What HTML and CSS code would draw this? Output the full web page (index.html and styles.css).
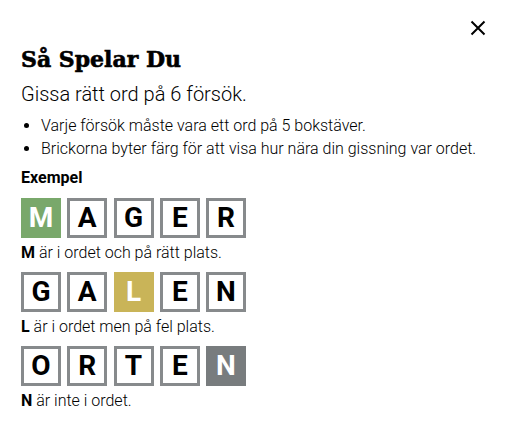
FILE: index.html
```html
<!DOCTYPE html>
<html lang="sv">
<head>
<meta charset="utf-8">
<title>Så Spelar Du</title>
<link rel="stylesheet" href="styles.css">
</head>
<body>
<div class="modal">
  <div class="modal-header">
    <button class="close" aria-label="Stäng">
      <svg width="16" height="16" viewBox="0 0 16 16"><path d="M1.5 1.5 L14.5 14.5 M14.5 1.5 L1.5 14.5" stroke="#000" stroke-width="2" fill="none"/></svg>
    </button>
  </div>
  <h1 class="title">Så Spelar Du</h1>
  <p class="subtitle">Gissa rätt ord på 6 försök.</p>
  <ul class="rules">
    <li>Varje försök måste vara ett ord på 5 bokstäver.</li>
    <li>Brickorna byter färg för att visa hur nära din gissning var ordet.</li>
  </ul>
  <div class="examples-label">Exempel</div>
  <div class="example">
    <div class="tiles">
      <div class="tile correct">M</div>
      <div class="tile">A</div>
      <div class="tile">G</div>
      <div class="tile">E</div>
      <div class="tile">R</div>
    </div>
    <p class="caption"><strong>M</strong> är i ordet och på rätt plats.</p>
  </div>
  <div class="example">
    <div class="tiles">
      <div class="tile">G</div>
      <div class="tile">A</div>
      <div class="tile present">L</div>
      <div class="tile">E</div>
      <div class="tile">N</div>
    </div>
    <p class="caption"><strong>L</strong> är i ordet men på fel plats.</p>
  </div>
  <div class="example">
    <div class="tiles">
      <div class="tile">O</div>
      <div class="tile">R</div>
      <div class="tile">T</div>
      <div class="tile">E</div>
      <div class="tile absent">N</div>
    </div>
    <p class="caption"><strong>N</strong> är inte i ordet.</p>
  </div>
</div>
</body>
</html>
```

FILE: styles.css
```css
html, body {
  margin: 0;
  padding: 0;
  background: #ffffff;
}

body {
  font-family: Roboto, "Liberation Sans", sans-serif;
  color: #000;
}

.modal {
  padding: 20px 22px 0 21px;
}

.modal-header {
  display: flex;
  justify-content: flex-end;
  height: 16px;
}

.close {
  border: 0;
  background: none;
  padding: 0;
  margin: 0;
  width: 16px;
  height: 16px;
  display: block;
  cursor: pointer;
}

.close svg {
  display: block;
}

.title {
  margin: 9px 0 0;
  font-family: "DejaVu Serif", "Liberation Serif", serif;
  font-weight: 700;
  font-size: 22px;
  line-height: 28px;
  -webkit-text-stroke: 0.6px #000;
}

.subtitle {
  margin: 8px 0 0;
  font-weight: 300;
  font-size: 20px;
  line-height: 26px;
}

.rules {
  margin: 6.5px 0 0;
  padding-left: 20px;
  font-weight: 300;
  font-size: 16px;
  line-height: 23px;
}

.examples-label {
  margin-top: 8.3px;
  font-weight: 700;
  font-size: 16px;
  line-height: 20px;
}

.example {
  margin-top: 10px;
}

.example + .example {
  margin-top: 8.5px;
}

.tiles {
  display: flex;
  gap: 6.25px;
}

.tile {
  box-sizing: border-box;
  width: 40px;
  height: 40px;
  border: 3px solid #878a8c;
  display: flex;
  align-items: center;
  justify-content: center;
  font-weight: 700;
  font-size: 28px;
  line-height: 1;
  color: #000;
  background: #fff;
}

.tile.correct {
  background: #79a86b;
  border-color: #79a86b;
  color: #fff;
}

.tile.present {
  background: #c9b458;
  border-color: #c9b458;
  color: #fff;
}

.tile.absent {
  background: #787c7e;
  border-color: #787c7e;
  color: #fff;
}

.caption {
  margin: 5.5px 0 0;
  font-weight: 300;
  font-size: 16px;
  line-height: 20px;
}

.caption strong {
  font-weight: 700;
}
```
